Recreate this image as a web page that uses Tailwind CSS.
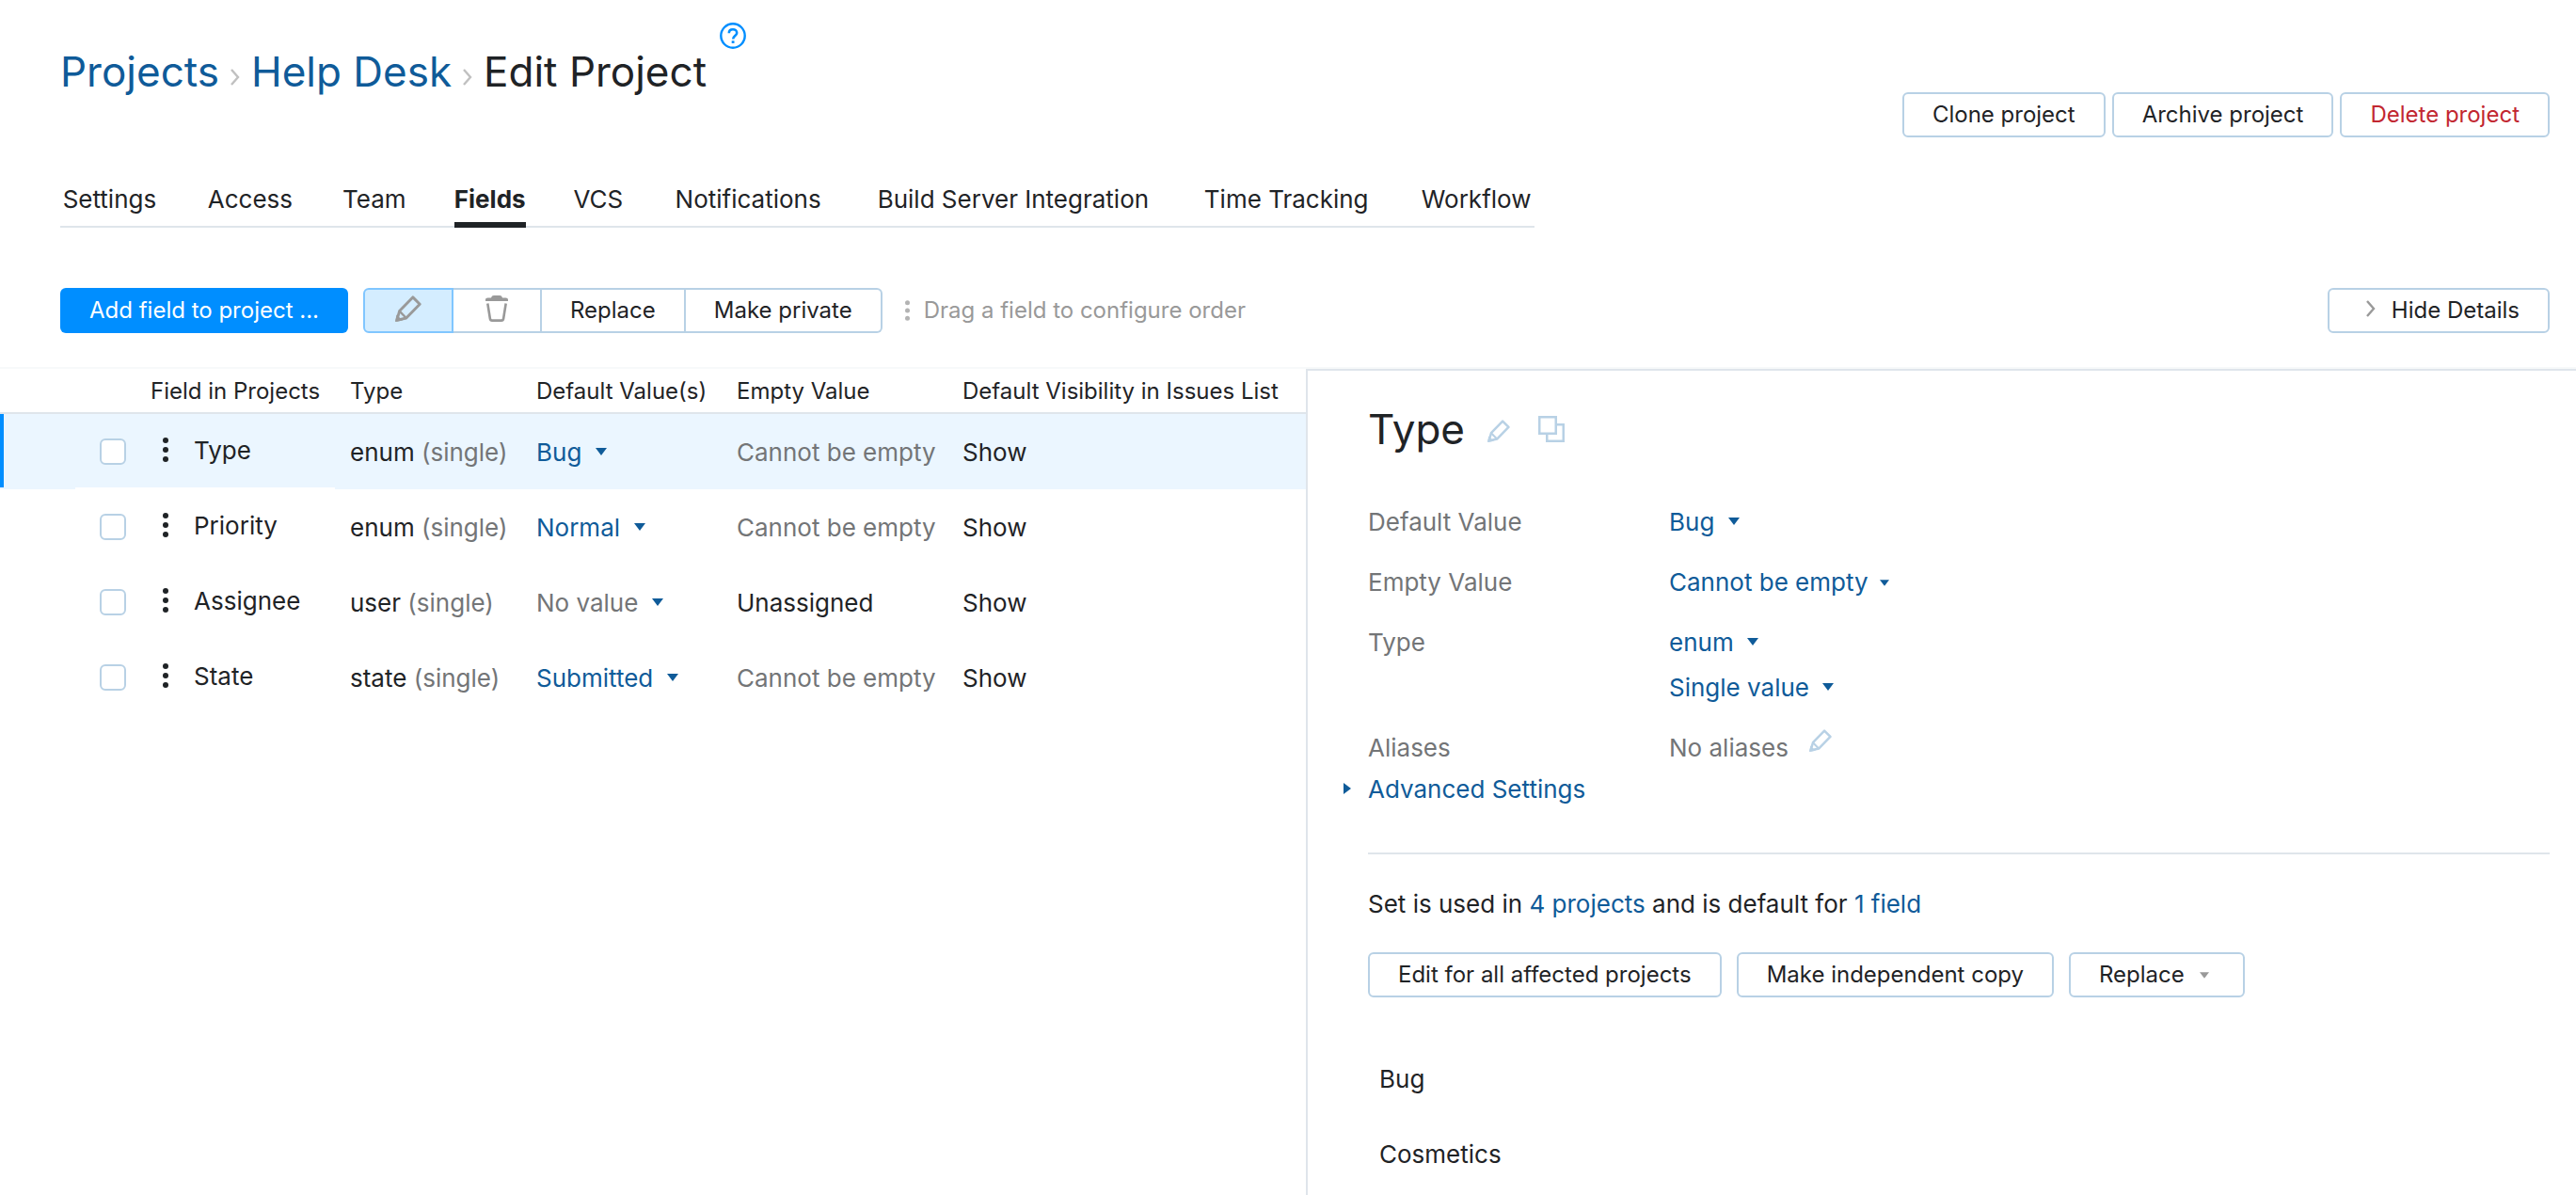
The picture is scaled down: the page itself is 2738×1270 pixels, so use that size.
<!DOCTYPE html>
<html lang="en">
<head>
    <meta charset="UTF-8">
    <meta name="viewport" content="width=device-width, initial-scale=1.0">
    <title>Edit Project - Help Desk</title>
    <script src="https://cdn.jsdelivr.net/npm/@tailwindcss/browser@4"></script>
</head>
<body class="min-h-screen flex flex-col bg-white text-[#1f2326] text-[26px] leading-8 font-['Inter','Liberation_Sans',sans-serif]">
    <!-- Shared icons -->
    <svg class="hidden">
        <symbol id="pencil" viewBox="0 0 28 28">
            <path d="M4.6 16.6 18.8 1.9 26.2 9.3 11.8 24 1.8 26.3Z" fill="none" stroke="currentColor" stroke-width="2.9" stroke-linejoin="round"/>
            <path d="M4.6 16.6 11.8 24" stroke="currentColor" stroke-width="2.4"/>
            <path d="M0 28 1.5 20.5 8 26.6Z" fill="currentColor"/>
        </symbol>
        <symbol id="caret" viewBox="0 0 12 8">
            <path d="M0 0H12L6 8Z" fill="currentColor"/>
        </symbol>
        <symbol id="dots" viewBox="0 0 6 26">
            <circle cx="3" cy="3" r="3" fill="currentColor"/>
            <circle cx="3" cy="13" r="3" fill="currentColor"/>
            <circle cx="3" cy="23" r="3" fill="currentColor"/>
        </symbol>
        <symbol id="chevron" viewBox="0 0 12 18">
            <path d="M2 1 9 9 2 17" fill="none" stroke="currentColor" stroke-width="2.4"/>
        </symbol>
    </svg>

    <!-- Header -->
    <header class="flex justify-between items-start pl-16 pr-7 pb-[46px]">
        <div class="flex items-start pt-6">
            <h1 class="flex items-center pt-[22px] text-[44px] leading-[60px]">
                <a href="#" class="text-[#0f5b99]">Projects</a>
                <svg class="w-3 h-[18px] mx-[11px] mt-3 text-[#c0c0c0]"><use href="#chevron"/></svg>
                <a href="#" class="text-[#0f5b99]">Help Desk</a>
                <svg class="w-3 h-[18px] mx-[11px] mt-3 text-[#c0c0c0]"><use href="#chevron"/></svg>
                <span>Edit Project</span>
            </h1>
            <a href="#" aria-label="Help" class="ml-[14px] text-[#008eff]">
                <svg class="w-7 h-7" viewBox="0 0 28 28" fill="none" stroke="currentColor">
                    <circle cx="14" cy="14" r="12.7" stroke-width="2.4"/>
                    <path d="M9.8 11.2C9.8 8.6 11.6 7.2 14 7.2S18.2 8.7 18.2 10.9C18.2 13.9 14.2 14.1 14.2 17.4" stroke-width="2.6"/>
                    <path d="M12.7 19.3H15.5V22H12.7Z" fill="currentColor" stroke="none"/>
                </svg>
            </a>
        </div>
        <div class="flex gap-[7px] pt-[98px] text-2xl">
            <button class="h-12 px-[30px] border-2 border-[#b8d1e5] rounded-md">Clone project</button>
            <button class="h-12 px-[30px] border-2 border-[#b8d1e5] rounded-md">Archive project</button>
            <button class="h-12 px-[30px] border-2 border-[#b8d1e5] rounded-md text-[#c22731]">Delete project</button>
        </div>
    </header>

    <!-- Tabs: each one reserves the width of its bold title -->
    <nav class="self-start ml-16 flex gap-[50px] border-b-2 border-[#dfe5eb] leading-9 text-center">
        <a href="#" data-title="Settings" class="pt-[2px] pb-[6px] after:block after:h-0 after:overflow-hidden after:font-bold after:content-[attr(data-title)]">Settings</a>
        <a href="#" data-title="Access" class="pt-[2px] pb-[6px] after:block after:h-0 after:overflow-hidden after:font-bold after:content-[attr(data-title)]">Access</a>
        <a href="#" data-title="Team" class="pt-[2px] pb-[6px] after:block after:h-0 after:overflow-hidden after:font-bold after:content-[attr(data-title)]">Team</a>
        <a href="#" class="pt-[2px] pb-[6px] -mb-[2px] border-b-6 border-[#1f2326] font-bold">Fields</a>
        <a href="#" data-title="VCS" class="pt-[2px] pb-[6px] after:block after:h-0 after:overflow-hidden after:font-bold after:content-[attr(data-title)]">VCS</a>
        <a href="#" data-title="Notifications" class="pt-[2px] pb-[6px] after:block after:h-0 after:overflow-hidden after:font-bold after:content-[attr(data-title)]">Notifications</a>
        <a href="#" data-title="Build Server Integration" class="pt-[2px] pb-[6px] after:block after:h-0 after:overflow-hidden after:font-bold after:content-[attr(data-title)]">Build Server Integration</a>
        <a href="#" data-title="Time Tracking" class="pt-[2px] pb-[6px] after:block after:h-0 after:overflow-hidden after:font-bold after:content-[attr(data-title)]">Time Tracking</a>
        <a href="#" data-title="Workflow" class="pt-[2px] pb-[6px] after:block after:h-0 after:overflow-hidden after:font-bold after:content-[attr(data-title)]">Workflow</a>
    </nav>

    <!-- Toolbar -->
    <div class="flex items-center mt-16 mb-9 pl-16 pr-7 text-2xl">
        <button class="h-12 px-[31px] rounded-md bg-[#008eff] text-white">Add field to project ...</button>
        <div class="flex ml-4">
            <button aria-label="Edit" class="w-24 h-12 flex items-center justify-center border-2 border-[#80c6ff] rounded-l-md bg-[#d4edff] text-[#999]">
                <svg class="w-7 h-7 mb-1"><use href="#pencil"/></svg>
            </button>
            <button aria-label="Delete" class="w-[94px] h-12 flex items-center justify-center border-y-2 border-r-2 border-[#b8d1e5] text-[#999]">
                <svg class="w-6 h-7 mb-1" viewBox="0 0 24 28">
                    <path d="M0 6V4.5C0 3.2 1 2.5 2.5 2.5H6C6.5 .8 7.5 0 9 0H15C16.5 0 17.5 .8 18 2.5H21.5C23 2.5 24 3.2 24 4.5V6Z" fill="currentColor"/>
                    <path d="M2.3 8.5 4.9 24.8C5.1 26 5.8 26.6 7 26.6H17C18.2 26.6 18.9 26 19.1 24.8L21.7 8.5" fill="none" stroke="currentColor" stroke-width="2.6"/>
                </svg>
            </button>
            <button class="h-12 px-[30px] border-y-2 border-r-2 border-[#b8d1e5]">Replace</button>
            <button class="h-12 px-[30px] border-y-2 border-r-2 border-[#b8d1e5] rounded-r-md">Make private</button>
        </div>
        <svg class="w-[5px] h-[22px] ml-6 mr-[15px] text-[#b3b3b3]"><use href="#dots"/></svg>
        <span class="text-[#999]">Drag a field to configure order</span>
        <button class="h-12 ml-auto pl-[38px] pr-[30px] flex items-center gap-4 border-2 border-[#b8d1e5] rounded-md">
            <svg class="w-3 h-[18px] mb-1 text-[#999]"><use href="#chevron"/></svg>
            Hide Details
        </button>
    </div>

    <main class="flex-1 flex items-stretch border-t-2 border-[#f7f9fa]">
        <!-- Fields table -->
        <div class="shrink-0">
            <table class="table-fixed w-[1388px] border-separate border-spacing-0 text-left">
                <colgroup>
                    <col class="w-20">
                    <col class="w-[276px]">
                    <col class="w-[198px]">
                    <col class="w-[213px]">
                    <col class="w-[240px]">
                    <col>
                </colgroup>
                <thead class="text-2xl">
                    <tr class="h-12">
                        <th class="border-b-2 border-[#dfe5eb]"></th>
                        <th class="pt-[2px] pl-20 border-b-2 border-[#dfe5eb] font-normal whitespace-nowrap">Field in Projects</th>
                        <th class="pt-[2px] pl-4 border-b-2 border-[#dfe5eb] font-normal">Type</th>
                        <th class="pt-[2px] pl-4 border-b-2 border-[#dfe5eb] font-normal whitespace-nowrap">Default Value(s)</th>
                        <th class="pt-[2px] pl-4 border-b-2 border-[#dfe5eb] font-normal">Empty Value</th>
                        <th class="pt-[2px] pl-4 border-b-2 border-[#dfe5eb] font-normal whitespace-nowrap">Default Visibility in Issues List</th>
                    </tr>
                </thead>
                <tbody>
                    <tr class="h-20 bg-[#ebf6ff]">
                        <td class="align-top"><div class="h-[78px] border-l-4 border-[#008eff]"></div></td>
                        <td class="pt-[2px] pl-[26px] border-b-2 border-white">
                            <div class="flex items-center">
                                <input type="checkbox" id="f1" class="appearance-none size-7 border-2 border-[#b8d1e5] rounded-md bg-white">
                                <svg class="w-[6px] h-[26px] ml-[39px] mr-[27px] mb-1"><use href="#dots"/></svg>
                                <label for="f1" class="pb-[2px]">Type</label>
                            </div>
                        </td>
                        <td class="pt-[2px] pl-4 whitespace-nowrap">enum <span class="text-[#737577]">(single)</span></td>
                        <td class="pt-[2px] pl-4"><div class="flex items-center gap-[14px] text-[#0f5b99]">
                            <select aria-label="Default value of Type" class="appearance-none"><option>Bug</option></select>
                            <svg class="w-3 h-2 mb-[2px]"><use href="#caret"/></svg>
                        </div></td>
                        <td class="pt-[2px] pl-4 whitespace-nowrap text-[#737577]">Cannot be empty</td>
                        <td class="pt-[2px] pl-4">Show</td>
                    </tr>
                    <tr class="h-20">
                        <td></td>
                        <td class="pt-[2px] pl-[26px] border-b-2 border-white">
                            <div class="flex items-center">
                                <input type="checkbox" id="f2" class="appearance-none size-7 border-2 border-[#b8d1e5] rounded-md bg-white">
                                <svg class="w-[6px] h-[26px] ml-[39px] mr-[27px] mb-1"><use href="#dots"/></svg>
                                <label for="f2" class="pb-[2px]">Priority</label>
                            </div>
                        </td>
                        <td class="pt-[2px] pl-4 whitespace-nowrap">enum <span class="text-[#737577]">(single)</span></td>
                        <td class="pt-[2px] pl-4"><div class="flex items-center gap-[14px] text-[#0f5b99]">
                            <select aria-label="Default value of Priority" class="appearance-none"><option>Normal</option></select>
                            <svg class="w-3 h-2 mb-[2px]"><use href="#caret"/></svg>
                        </div></td>
                        <td class="pt-[2px] pl-4 whitespace-nowrap text-[#737577]">Cannot be empty</td>
                        <td class="pt-[2px] pl-4">Show</td>
                    </tr>
                    <tr class="h-20">
                        <td></td>
                        <td class="pt-[2px] pl-[26px] border-b-2 border-white">
                            <div class="flex items-center">
                                <input type="checkbox" id="f3" class="appearance-none size-7 border-2 border-[#b8d1e5] rounded-md bg-white">
                                <svg class="w-[6px] h-[26px] ml-[39px] mr-[27px] mb-1"><use href="#dots"/></svg>
                                <label for="f3" class="pb-[2px]">Assignee</label>
                            </div>
                        </td>
                        <td class="pt-[2px] pl-4 whitespace-nowrap">user <span class="text-[#737577]">(single)</span></td>
                        <td class="pt-[2px] pl-4"><div class="flex items-center gap-[14px] text-[#0f5b99]">
                            <select aria-label="Default value of Assignee" class="appearance-none text-[#737577]"><option>No value</option></select>
                            <svg class="w-3 h-2 mb-[2px]"><use href="#caret"/></svg>
                        </div></td>
                        <td class="pt-[2px] pl-4">Unassigned</td>
                        <td class="pt-[2px] pl-4">Show</td>
                    </tr>
                    <tr class="h-20">
                        <td></td>
                        <td class="pt-[2px] pl-[26px] border-b-2 border-white">
                            <div class="flex items-center">
                                <input type="checkbox" id="f4" class="appearance-none size-7 border-2 border-[#b8d1e5] rounded-md bg-white">
                                <svg class="w-[6px] h-[26px] ml-[39px] mr-[27px] mb-1"><use href="#dots"/></svg>
                                <label for="f4" class="pb-[2px]">State</label>
                            </div>
                        </td>
                        <td class="pt-[2px] pl-4 whitespace-nowrap">state <span class="text-[#737577]">(single)</span></td>
                        <td class="pt-[2px] pl-4"><div class="flex items-center gap-[14px] text-[#0f5b99]">
                            <select aria-label="Default value of State" class="appearance-none"><option>Submitted</option></select>
                            <svg class="w-3 h-2 mb-[2px]"><use href="#caret"/></svg>
                        </div></td>
                        <td class="pt-[2px] pl-4 whitespace-nowrap text-[#737577]">Cannot be empty</td>
                        <td class="pt-[2px] pl-4">Show</td>
                    </tr>
                </tbody>
            </table>
        </div>

        <!-- Details panel -->
        <section class="flex-1 border-l-2 border-t-2 border-[#dfe5eb] pl-16 pr-7 pt-8">
            <div class="flex items-center">
                <h2 class="text-[44px] leading-[60px]">Type</h2>
                <button aria-label="Rename" class="ml-6 mt-1 text-[#b8d1e5]"><svg class="size-6"><use href="#pencil"/></svg></button>
                <button aria-label="Copy" class="ml-[30px] text-[#b8d1e5]">
                    <svg class="size-7" viewBox="0 0 28 28" fill="none" stroke="currentColor" stroke-width="2.5">
                        <path d="M1.25 1.25H18.75V18.75H1.25Z"/>
                        <path d="M19 9.25H26.75V26.75H9.25V19"/>
                    </svg>
                </button>
            </div>

            <dl class="grid grid-cols-[320px_1fr] gap-y-8 mt-[53px] text-[#737577]">
                <dt><label for="defaultValue">Default Value</label></dt>
                <dd class="flex items-center gap-[14px] text-[#0f5b99]">
                    <select id="defaultValue" class="appearance-none h-8"><option>Bug</option></select>
                    <svg class="w-3 h-2 mb-[2px]"><use href="#caret"/></svg>
                </dd>
                <dt><label for="emptyValue">Empty Value</label></dt>
                <dd class="flex items-center gap-3 text-[#0f5b99]">
                    <select id="emptyValue" class="appearance-none h-8"><option>Cannot be empty</option></select>
                    <svg class="w-[10px] h-[7px]"><use href="#caret"/></svg>
                </dd>
                <dt><label for="fieldType">Type</label></dt>
                <dd class="flex flex-col gap-4 text-[#0f5b99]">
                    <div class="flex items-center gap-[14px]">
                        <select id="fieldType" class="appearance-none h-8"><option>enum</option></select>
                        <svg class="w-3 h-2 mb-[2px]"><use href="#caret"/></svg>
                    </div>
                    <div class="flex items-center gap-[14px]">
                        <select aria-label="Number of values" class="appearance-none h-8"><option>Single value</option></select>
                        <svg class="w-3 h-2 mb-[2px]"><use href="#caret"/></svg>
                    </div>
                </dd>
                <dt>Aliases</dt>
                <dd class="flex items-start h-8">
                    No aliases
                    <button aria-label="Edit aliases" class="ml-[22px] -mt-1 text-[#b8d1e5]"><svg class="size-6"><use href="#pencil"/></svg></button>
                </dd>
            </dl>

            <button class="flex items-center gap-[18px] mt-3 -ml-[26px] text-[#0f5b99]">
                <svg class="w-2 h-3 mb-[2px]" viewBox="0 0 8 12"><path d="M0 0 8 6 0 12Z" fill="currentColor"/></svg>
                Advanced Settings
            </button>

            <hr class="mt-[51px] border-t-2 border-[#dfe5eb]">

            <p class="mt-[37px]">Set is used in <a href="#" class="text-[#0f5b99]">4 projects</a> and is default for <a href="#" class="text-[#0f5b99]">1 field</a></p>

            <div class="flex gap-4 mt-[35px] text-2xl">
                <button class="h-12 px-[30px] border-2 border-[#b8d1e5] rounded-md">Edit for all affected projects</button>
                <button class="h-12 px-[30px] border-2 border-[#b8d1e5] rounded-md">Make independent copy</button>
                <button class="h-12 pl-[30px] pr-9 flex items-center gap-4 border-2 border-[#b8d1e5] rounded-md">
                    Replace
                    <svg class="w-[10px] h-[7px] text-[#999]"><use href="#caret"/></svg>
                </button>
            </div>

            <ul class="mt-[47px] pl-3">
                <li class="h-20 flex items-center">Bug</li>
                <li class="h-20 flex items-center">Cosmetics</li>
            </ul>
        </section>
    </main>
</body>
</html>
